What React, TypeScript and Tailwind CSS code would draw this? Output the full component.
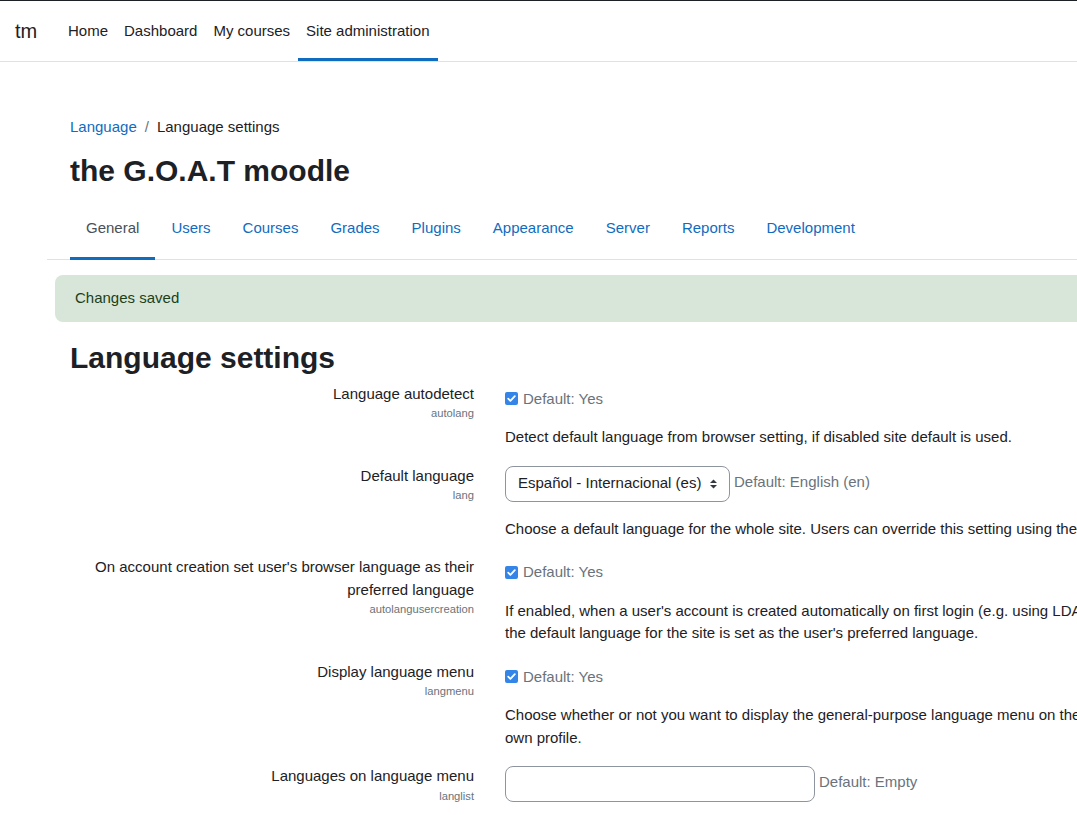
import React from "react";

const navItems = ["Home", "Dashboard", "My courses", "Site administration"];
const tabs = [
  "General",
  "Users",
  "Courses",
  "Grades",
  "Plugins",
  "Appearance",
  "Server",
  "Reports",
  "Development",
];

function Check() {
  return (
    <span className="inline-flex w-[13px] h-[13px] rounded-[2px] bg-[#3585e8] items-center justify-center mr-[5px] shrink-0">
      <svg width="11" height="11" viewBox="0 0 11 11">
        <path
          d="M2.2 5.6 L4.4 7.8 L8.8 3.2"
          fill="none"
          stroke="white"
          strokeWidth="1.8"
          strokeLinecap="round"
          strokeLinejoin="round"
        />
      </svg>
    </span>
  );
}

interface RowProps {
  label: React.ReactNode;
  name: string;
  children: React.ReactNode;
}

function SettingRow({ label, name, children }: RowProps) {
  return (
    <div className="flex mb-4">
      {/* label column, right aligned */}
      <div className="w-[404px] shrink-0 text-right">
        <div className="leading-[22.5px]">{label}</div>
        <div className="text-[11.2px] leading-[17px] text-[#6a737b]">{name}</div>
      </div>
      <div className="ml-[31px] whitespace-nowrap">{children}</div>
    </div>
  );
}

function DefaultYes() {
  return (
    <div className="flex items-center pt-[5px] leading-[22.5px] text-[#6a737b]">
      <Check />
      Default: Yes
    </div>
  );
}

export default function App() {
  return (
    <div className="w-[1077px] h-[815px] overflow-hidden bg-white text-[15px] leading-[1.5] text-[#1d2125] font-['Liberation_Sans',Arial,sans-serif]">
      {/* top navbar */}
      <header className="h-[62px] flex items-stretch border-t border-b border-t-[#1d2125] border-b-[#dee2e6]">
        <div className="self-center ml-[15px] w-[45px] text-[20px] leading-[30px]">tm</div>
        {navItems.map((item, i) => (
          <a
            key={item}
            className={
              "flex items-center px-2 border-t-[3px] border-b-[3px] border-t-transparent " +
              (i === navItems.length - 1 ? "border-b-[#0f6cbf]" : "border-b-transparent")
            }
          >
            {item}
          </a>
        ))}
      </header>

      <main className="pl-[70px] pt-[54px]">
        {/* breadcrumb */}
        <div className="flex leading-[22.5px]">
          <a className="text-[#0f6cbf]">Language</a>
          <span className="px-2 text-[#6a737b]">/</span>
          <span>Language settings</span>
        </div>

        <h1 className="mt-[14px] text-[30px] leading-[36px] font-bold">the G.O.A.T moodle</h1>

        {/* secondary navigation */}
        <nav className="mt-[8px] -ml-[23px] pl-[23px] flex border-b border-[#dee2e6] whitespace-nowrap">
          {tabs.map((t, i) => (
            <a
              key={t}
              className={
                "px-4 pt-[20px] pb-[18px] leading-[22.5px] border-b-[3px] -mb-px " +
                (i === 0 ? "border-[#0f6cbf] text-[#495057]" : "border-transparent text-[#0f6cbf]")
              }
            >
              {t}
            </a>
          ))}
        </nav>

        <div className="mt-[15px] -ml-[15px] w-[1100px] rounded-lg bg-[#d7e6d8] text-[#1c3f1a] px-5 py-3 leading-[22.5px]">
          Changes saved
        </div>

        <h2 className="mt-[18px] mb-[7px] text-[30px] leading-[36px] font-bold">Language settings</h2>

        <SettingRow label="Language autodetect" name="autolang">
          <DefaultYes />
          <p className="mt-4 leading-[22.5px]">
            Detect default language from browser setting, if disabled site default is used.
          </p>
        </SettingRow>

        <SettingRow label="Default language" name="lang">
          <div className="flex items-start pt-px">
            <div className="w-[225px] h-[36px] rounded-lg border border-[#8f959e] flex items-center justify-between pl-3 pr-[11px]">
              <span>Español - Internacional (es)</span>
              <svg width="9" height="12" viewBox="0 0 9 12">
                <path d="M4.5 1.5 L8 5 L1 5 Z" fill="#343a40" />
                <path d="M4.5 10.5 L8 7 L1 7 Z" fill="#343a40" />
              </svg>
            </div>
            <span className="ml-1 pt-[5px] leading-[22.5px] text-[#6a737b]">Default: English (en)</span>
          </div>
          <p className="mt-4 leading-[22.5px]">
            Choose a default language for the whole site. Users can override this setting using the language menu or the setting in their own profile.
          </p>
        </SettingRow>

        <SettingRow
          label={
            <>
              On account creation set user's browser language as their
              <br />
              preferred language
            </>
          }
          name="autolangusercreation"
        >
          <DefaultYes />
          <p className="mt-4 leading-[22.5px]">
            If enabled, when a user's account is created automatically on first login (e.g. using LDAP), the user's browser language is set as their preferred language. Otherwise,
            <br />
            the default language for the site is set as the user's preferred language.
          </p>
        </SettingRow>

        <SettingRow label="Display language menu" name="langmenu">
          <DefaultYes />
          <p className="mt-4 leading-[22.5px]">
            Choose whether or not you want to display the general-purpose language menu on the home page, login page etc. This does not affect the user's ability to set the preferred language in their
            <br />
            own profile.
          </p>
        </SettingRow>

        <SettingRow label="Languages on language menu" name="langlist">
          <div className="flex items-start pt-px">
            <div className="w-[310px] h-[36px] rounded-lg border border-[#8f959e]" />
            <span className="ml-1 pt-[5px] leading-[22.5px] text-[#6a737b]">Default: Empty</span>
          </div>
        </SettingRow>
      </main>
    </div>
  );
}
